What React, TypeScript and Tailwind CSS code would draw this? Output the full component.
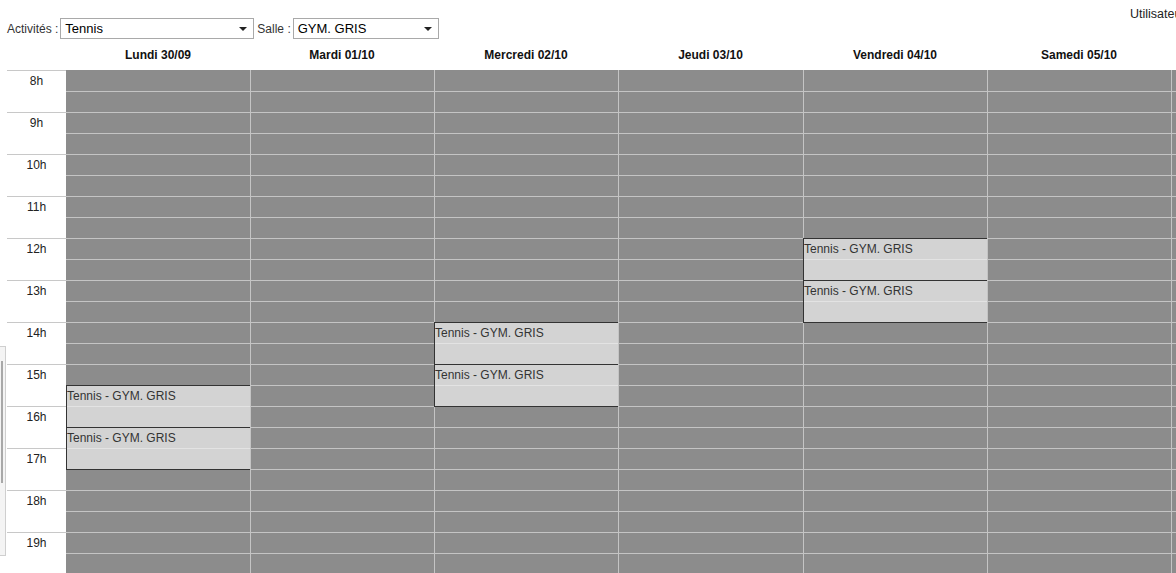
import React from 'react';

const days = ['Lundi 30/09', 'Mardi 01/10', 'Mercredi 02/10', 'Jeudi 03/10', 'Vendredi 04/10', 'Samedi 05/10', ''];
const hours = [8, 9, 10, 11, 12, 13, 14, 15, 16, 17, 18, 19];

// start hour (decimal) of each session per day index
const sessions: Record<number, number[]> = {
  0: [15.5, 16.5],
  2: [14, 15],
  4: [12, 13],
};

const HOUR = 42;

function Select({ value, width }: { value: string; width: string }) {
  return (
    <div className={`${width} h-[21px] border border-[#a9a9a9] bg-white flex items-center justify-between pl-[4px] pr-[6px]`}>
      <span className="text-[13px] text-black leading-none">{value}</span>
      <span className="w-0 h-0 border-l-[4px] border-r-[4px] border-t-[4px] border-l-transparent border-r-transparent border-t-[#222]" />
    </div>
  );
}

function DayColumn({ index }: { index: number }) {
  const slots = Array.from({ length: hours.length * 2 });
  return (
    <div className={`relative ${index > 0 ? 'border-l border-[#c4c4c4]' : ''}`}>
      {slots.map((_, i) => (
        <div key={i} className="h-[21px] border-t border-[#c4c4c4] first:border-t-0" />
      ))}
      {(sessions[index] || []).map((start) => (
        <div
          key={start}
          className={`absolute top-0 w-[185px] h-[43px] border border-[#333] bg-[#d3d3d3] ${index > 0 ? 'left-[-1px]' : 'left-0'}`}
          style={{ top: (start - 8) * HOUR }}
        >
          <div className="absolute left-0 right-0 top-[20px] h-px bg-[#e3e3e3]" />
          <div className="relative pt-[3px] text-[12px] leading-[15px] text-[#333]">Tennis - GYM. GRIS</div>
        </div>
      ))}
    </div>
  );
}

const cols = 'grid grid-cols-[184px_184px_184px_185px_184px_184px_184px]';

export default function App() {
  return (
    <div className="relative w-[1176px] h-[573px] overflow-hidden bg-white font-['Liberation_Sans',Arial,sans-serif] text-[#222]">
      {/* user label, clipped at the right */}
      <div className="absolute left-[1130px] top-[5px] text-[12.5px] whitespace-nowrap text-[#222]">Utilisateur</div>

      {/* filters */}
      <div className="flex items-center pt-[18px] pl-[7px] h-[39px]">
        <span className="text-[12px] text-[#333] mr-[2px]">Activités :</span>
        <Select value="Tennis" width="w-[194px]" />
        <span className="text-[12px] text-[#333] ml-[3px] mr-[2px]">Salle :</span>
        <Select value="GYM. GRIS" width="w-[146px]" />
      </div>

      {/* day headers */}
      <div className="flex mt-[5px] h-[26px]">
        <div className="w-[66px] shrink-0" />
        <div className={`${cols} shrink-0`}>
          {days.map((d, i) => (
            <div key={i} className="text-center text-[12px] font-bold text-[#111] leading-[20px] pt-[1px]">{d}</div>
          ))}
        </div>
      </div>

      {/* calendar body */}
      <div className="flex">
        <div className="w-[66px] shrink-0 pl-[7px]">
          {hours.map((h) => (
            <div key={h} className="h-[42px] border-t border-[#c8c8c8] text-center text-[12px] pt-[1px] text-[#222]">
              {h}h
            </div>
          ))}
        </div>
        <div className={`${cols} shrink-0 bg-[#8c8c8c]`}>
          {days.map((_, i) => (
            <DayColumn key={i} index={i} />
          ))}
        </div>
      </div>

      {/* collapsed side panel at the left edge */}
      <div className="absolute left-[-1px] top-[346px] w-[7px] h-[210px] border border-[#cfcfcf] bg-[#f4f4f4]">
        <div className="absolute left-[1px] top-[14px] w-[2px] h-[122px] bg-[#a8a8a8]" />
      </div>
    </div>
  );
}
